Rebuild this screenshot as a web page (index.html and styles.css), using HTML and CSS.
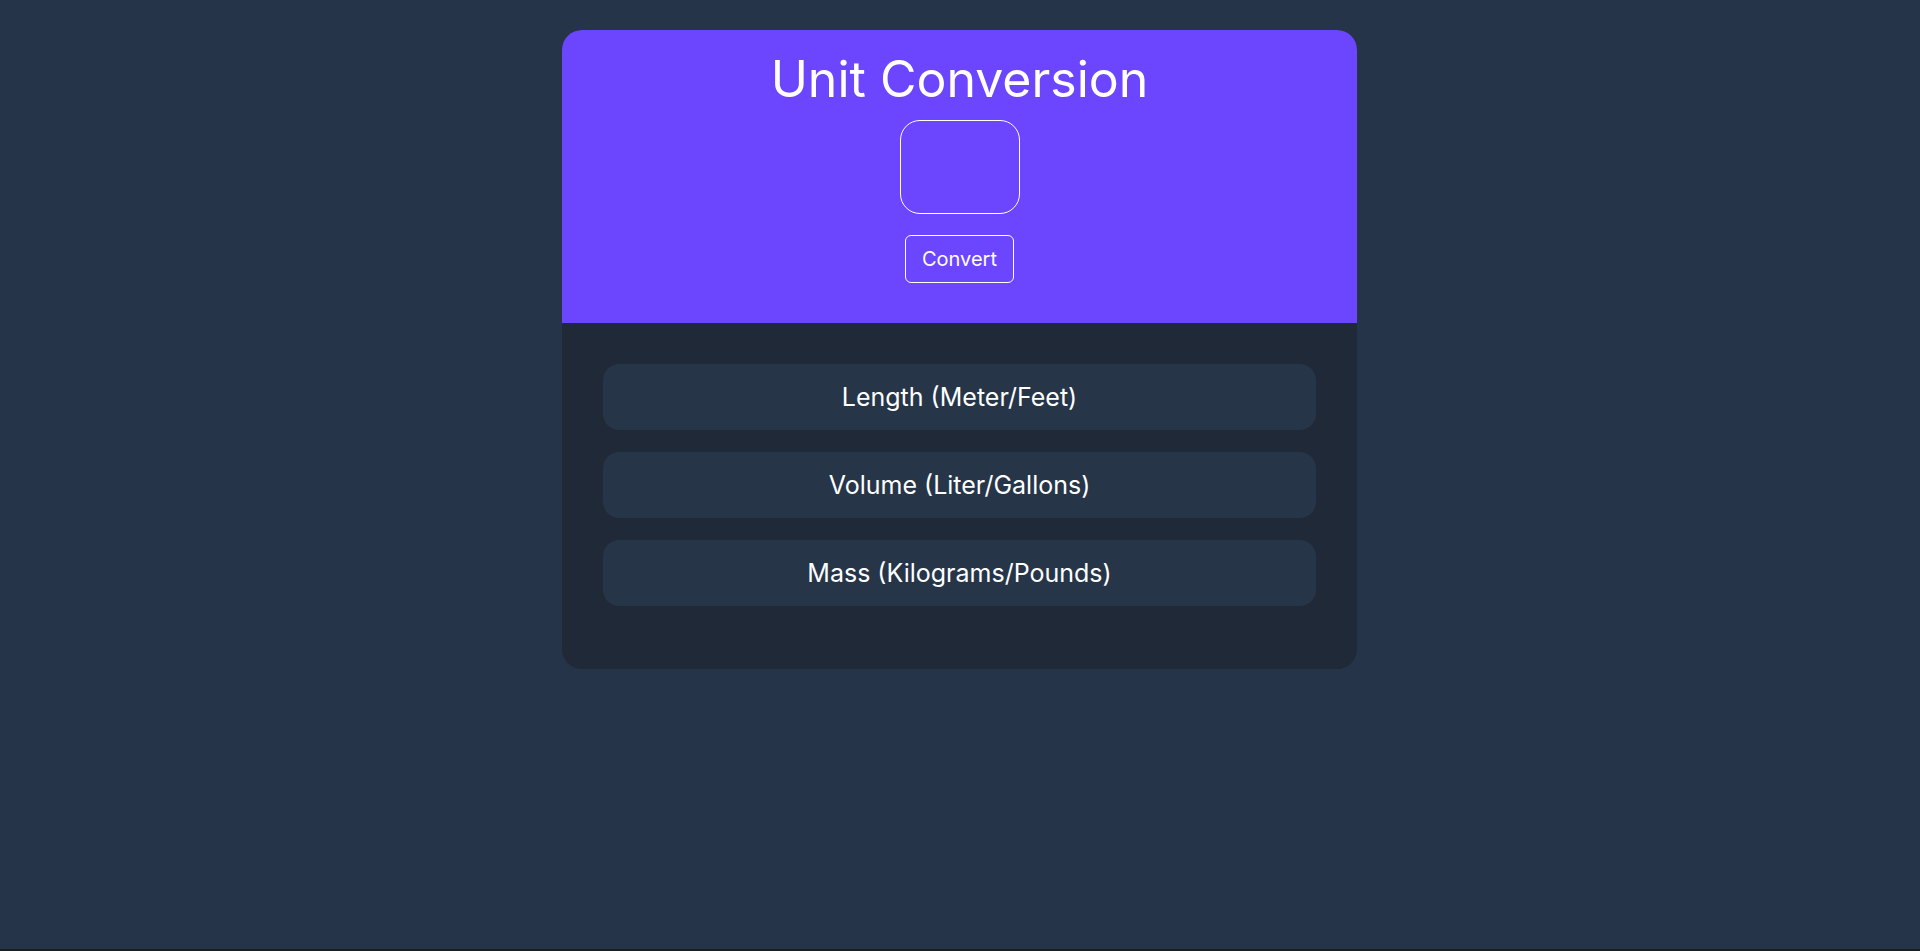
FILE: index.html
```html
<!DOCTYPE html>
<html lang="en">
<head>
<meta charset="utf-8">
<title>Unit Conversion</title>
<link rel="stylesheet" href="styles.css">
</head>
<body>
<main class="card">
  <header class="card-head">
    <h1 class="title">Unit Conversion</h1>
    <input class="value-input" type="text" aria-label="Value">
    <button class="convert-btn" type="button">Convert</button>
  </header>
  <section class="card-body">
    <div class="result">Length (Meter/Feet)</div>
    <div class="result">Volume (Liter/Gallons)</div>
    <div class="result">Mass (Kilograms/Pounds)</div>
  </section>
</main>
</body>
</html>
```

FILE: styles.css
```css
html {
  background: #1c1d1f;
}
body {
  margin: 0;
  height: 949px;
  background: #253448;
  font-family: Inter, "Noto Sans", sans-serif;
  color: #ffffff;
  display: flex;
  flex-direction: column;
  align-items: center;
  padding: 30px 1px 0 0;
  box-sizing: border-box;
}
.card {
  width: 795px;
  border-radius: 20px;
  overflow: hidden;
  background: #1f2937;
}
.card-head {
  background: #6c45ff;
  display: flex;
  flex-direction: column;
  align-items: center;
  padding: 19px 0 40px;
}
.title {
  margin: 0;
  font-size: 50px;
  font-weight: 400;
  line-height: 60px;
}
.value-input {
  margin-top: 11px;
  width: 120px;
  height: 94px;
  box-sizing: border-box;
  border: 1px solid #ffffff;
  border-radius: 20px;
  background: transparent;
  color: #fff;
  font: inherit;
  font-size: 20px;
  text-align: center;
  outline: none;
}
.convert-btn {
  margin-top: 21px;
  width: 109px;
  height: 48px;
  box-sizing: border-box;
  border: 1px solid #ffffff;
  border-radius: 6px;
  background: transparent;
  color: #fff;
  font-family: inherit;
  font-size: 20px;
  padding: 0;
}
.card-body {
  padding: 41px 41px 63px;
  display: flex;
  flex-direction: column;
  gap: 22px;
}
.result {
  height: 66px;
  border-radius: 16px;
  background: #263548;
  display: flex;
  align-items: center;
  justify-content: center;
  font-size: 25px;
}
```
